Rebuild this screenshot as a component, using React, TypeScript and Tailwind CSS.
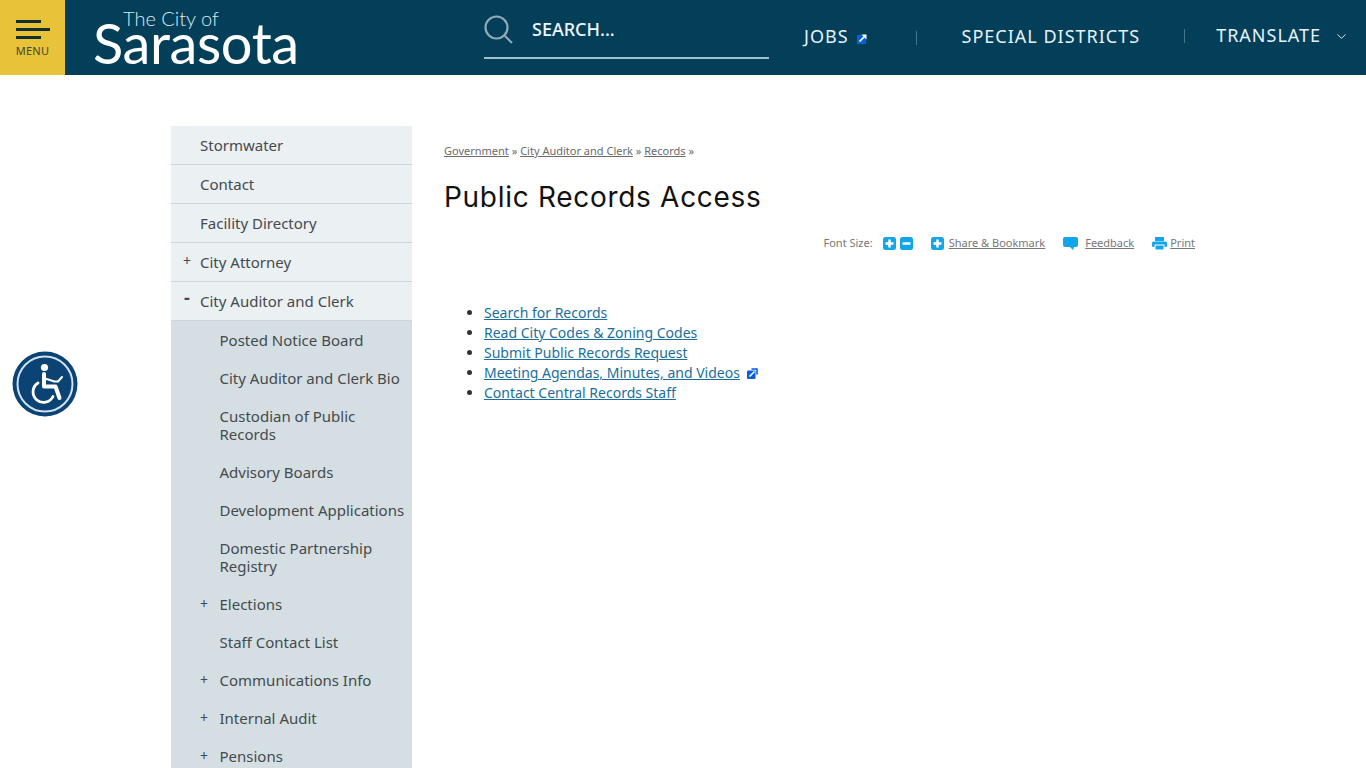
import { ChevronDown } from "lucide-react"

const topItems = [
  { label: "Stormwater" },
  { label: "Contact" },
  { label: "Facility Directory" },
  { label: "City Attorney", mark: "+" },
  { label: "City Auditor and Clerk", mark: "-" },
]

const subItems = [
  { label: "Posted Notice Board" },
  { label: "City Auditor and Clerk Bio" },
  { label: "Custodian of Public Records" },
  { label: "Advisory Boards" },
  { label: "Development Applications" },
  { label: "Domestic Partnership Registry" },
  { label: "Elections", mark: "+" },
  { label: "Staff Contact List" },
  { label: "Communications Info", mark: "+" },
  { label: "Internal Audit", mark: "+" },
  { label: "Pensions", mark: "+" },
]

const links = [
  "Search for Records",
  "Read City Codes & Zoning Codes",
  "Submit Public Records Request",
  "Meeting Agendas, Minutes, and Videos",
  "Contact Central Records Staff",
]

function ExternalIcon({ className }: { className?: string }) {
  return (
    <svg viewBox="0 0 11 11" className={className}>
      <rect x="0" y="2.5" width="8.5" height="8.5" rx="1" fill="#0a5fd8" />
      <path d="M2.5 8.5 L7.5 3.5" stroke="#fff" strokeWidth="1.6" fill="none" />
      <path d="M4.5 1 H10 V6.5" stroke="#0a5fd8" strokeWidth="1.6" fill="none" />
    </svg>
  )
}

function JobsIcon() {
  return (
    <svg viewBox="0 0 11 11" className="ml-[8px] mt-[3px] h-[11px] w-[11px]">
      <rect x="0" y="2" width="9" height="9" fill="#0a5fd8" />
      <path d="M2.5 8.5 L7.5 3.5" stroke="#fff" strokeWidth="1.7" fill="none" />
      <path d="M4.5 1.5 H9.5 V6.5 Z" fill="#fff" />
    </svg>
  )
}

function SquareIcon({ minus }: { minus?: boolean }) {
  return (
    <svg viewBox="0 0 13 13" className="h-[13px] w-[13px]">
      <rect width="13" height="13" rx="2.5" fill="#12a5e8" />
      <rect x="2.5" y="5.25" width="8" height="2.5" fill="#fff" />
      {!minus && <rect x="5.25" y="2.5" width="2.5" height="8" fill="#fff" />}
    </svg>
  )
}

function AccessIcon() {
  return (
    <svg viewBox="0 0 66 66" className="h-[66px] w-[66px]">
      <circle cx="33" cy="33" r="32.5" fill="#0b4474" />
      <circle cx="33" cy="33" r="27.5" fill="none" stroke="#cfe1ef" strokeWidth="2" />
      <circle cx="32.5" cy="16.5" r="3.6" fill="#fff" />
      <path d="M32 23 V35.5 H43.5 L47.5 47" fill="none" stroke="#fff" strokeWidth="4" strokeLinecap="round" strokeLinejoin="round" />
      <path d="M33 27.5 L42.5 30.5 H46 L50 26" fill="none" stroke="#fff" strokeWidth="2" strokeLinecap="round" strokeLinejoin="round" />
      <path d="M26 32 A10.5 10.5 0 1 0 41 45.5" fill="none" stroke="#fff" strokeWidth="2.8" strokeLinecap="round" />
    </svg>
  )
}

export default function App() {
  return (
    <div className="relative h-[768px] overflow-hidden bg-white font-['Noto_Sans',sans-serif] text-[#3f4549]">
      <header className="flex h-[75px] bg-[#043f5a] text-white">
        <div className="flex w-[65px] flex-col items-center bg-[#e8c33a] pt-[20px] text-[#3d4a2c]">
          <span className="h-[3px] w-[25px] -translate-x-[4px] bg-[#12302f]" />
          <span className="mt-[5px] h-[3px] w-[34px] bg-[#12302f]" />
          <span className="mt-[5px] h-[3px] w-[25px] -translate-x-[4px] bg-[#12302f]" />
          <span className="mt-[4px] text-[11px] leading-[15px] tracking-[0.3px]">MENU</span>
        </div>

        <div className="relative ml-[29px] w-[390px] font-['Lato',sans-serif]">
          <div className="absolute left-[29px] top-[6px] text-[20px] font-light leading-[24px] text-[#dbe9ee]">The City of</div>
          <div className="absolute left-[-1px] top-[12px] text-[56px] font-normal leading-[62px] tracking-[-0.4px]">Sarasota</div>
        </div>

        <div className="ml-0 flex h-[59px] w-[285px] items-center border-b-2 border-[#a3c0d0] pb-[1px]">
          <svg viewBox="0 0 29 29" className="h-[29px] w-[29px] translate-y-[1px]" fill="none" stroke="#8fa9b8" strokeWidth="2.2">
            <circle cx="12.5" cy="12.5" r="11" />
            <path d="M20.5 20.5 L28 28" />
          </svg>
          <span className="ml-[19px] translate-y-px text-[18px] font-medium text-[#eef7fa]">SEARCH...</span>
        </div>

        <nav className="flex flex-1 items-start pt-[24px] text-[18px] leading-[25px] tracking-[1px] text-[#e6f2f7]">
          <a className="ml-[35px] flex items-center">
            JOBS
            <JobsIcon />
          </a>
          <span className="ml-[48px] mt-[7px] h-[14px] w-px bg-[#47748a]" />
          <a className="ml-[45px]">SPECIAL DISTRICTS</a>
          <span className="ml-[44px] mt-[5px] h-[14px] w-px bg-[#47748a]" />
          <a className="ml-[31px] -translate-y-px">TRANSLATE</a>
          <ChevronDown className="ml-[13px] mt-[5px] h-[15px] w-[15px]" strokeWidth={1.5} />
        </nav>
      </header>

      <main className="ml-[171px] mt-[51px] flex items-start">
        <aside className="w-[241px] text-[15px] leading-[18px] text-[#444a4e]">
          <ul>
            {topItems.map((item) => (
              <li key={item.label} className="relative h-[39px] border-b border-[#cdd6db] bg-[#ebf0f3] pl-[29px] pt-[10px]">
                {item.mark === "+" && <span className="absolute left-[12px] top-[9px] text-[14px]">+</span>}
                {item.mark === "-" && <span className="absolute left-[13px] top-[6px] text-[18px] font-bold">-</span>}
                {item.label}
              </li>
            ))}
          </ul>
          <ul className="bg-[#d5dfe3]">
            {subItems.map((item) => (
              <li key={item.label} className="relative py-[10px] pl-[48.5px] pr-[2px]">
                {item.mark && <span className="absolute left-[29px] top-[10px] text-[14px]">{item.mark}</span>}
                {item.label}
              </li>
            ))}
          </ul>
        </aside>

        <section className="ml-[32px] w-[751px]">
          <div className="mt-[17px] text-[11px] leading-[15px] text-[#6b6b6b]">
            <a className="underline">Government</a> » <a className="underline">City Auditor and Clerk</a> » <a className="underline">Records</a> »
          </div>
          <h1 className="mt-[21px] font-['Inter',sans-serif] text-[28px] font-normal leading-[36px] tracking-[0.7px] text-[#111]">Public Records Access</h1>

          <div className="mt-[20px] flex h-[16px] items-center justify-end text-[11px] text-[#777]">
            <span>Font Size:</span>
            <span className="ml-[10px]"><SquareIcon /></span>
            <span className="ml-[4px]"><SquareIcon minus /></span>
            <span className="ml-[18px]"><SquareIcon /></span>
            <a className="ml-[5px] underline">Share &amp; Bookmark</a>
            <svg viewBox="0 0 15 15" className="ml-[18px] h-[15px] w-[15px]">
              <path d="M2 1 H13 a2 2 0 0 1 2 2 V9 a2 2 0 0 1 -2 2 H11 L10 14 L7 11 H2 a2 2 0 0 1 -2 -2 V3 a2 2 0 0 1 2 -2 Z" fill="#12a5e8" />
            </svg>
            <a className="ml-[7px] underline">Feedback</a>
            <svg viewBox="0 0 15 13" className="ml-[18px] h-[13px] w-[15px]">
              <rect x="3" y="0" width="9" height="4" fill="#12a5e8" />
              <rect x="0" y="4.5" width="15" height="5.5" rx="1.5" fill="#12a5e8" />
              <rect x="3" y="8" width="9" height="5" fill="#12a5e8" stroke="#fff" strokeWidth="1" />
            </svg>
            <a className="ml-[3px] underline">Print</a>
          </div>

          <ul className="ml-[40px] mt-[52px] list-disc text-[14px] leading-[20px] text-[#1a6f9c] marker:text-[#333]">
            {links.map((link) => (
              <li key={link}>
                <a className="underline">{link}</a>
                {link.startsWith("Meeting") && <ExternalIcon className="ml-[7px] inline-block h-[11px] w-[11px] -translate-y-px" />}
              </li>
            ))}
          </ul>
        </section>
      </main>

      <div className="absolute left-[12px] top-[351px]">
        <AccessIcon />
      </div>
    </div>
  )
}
